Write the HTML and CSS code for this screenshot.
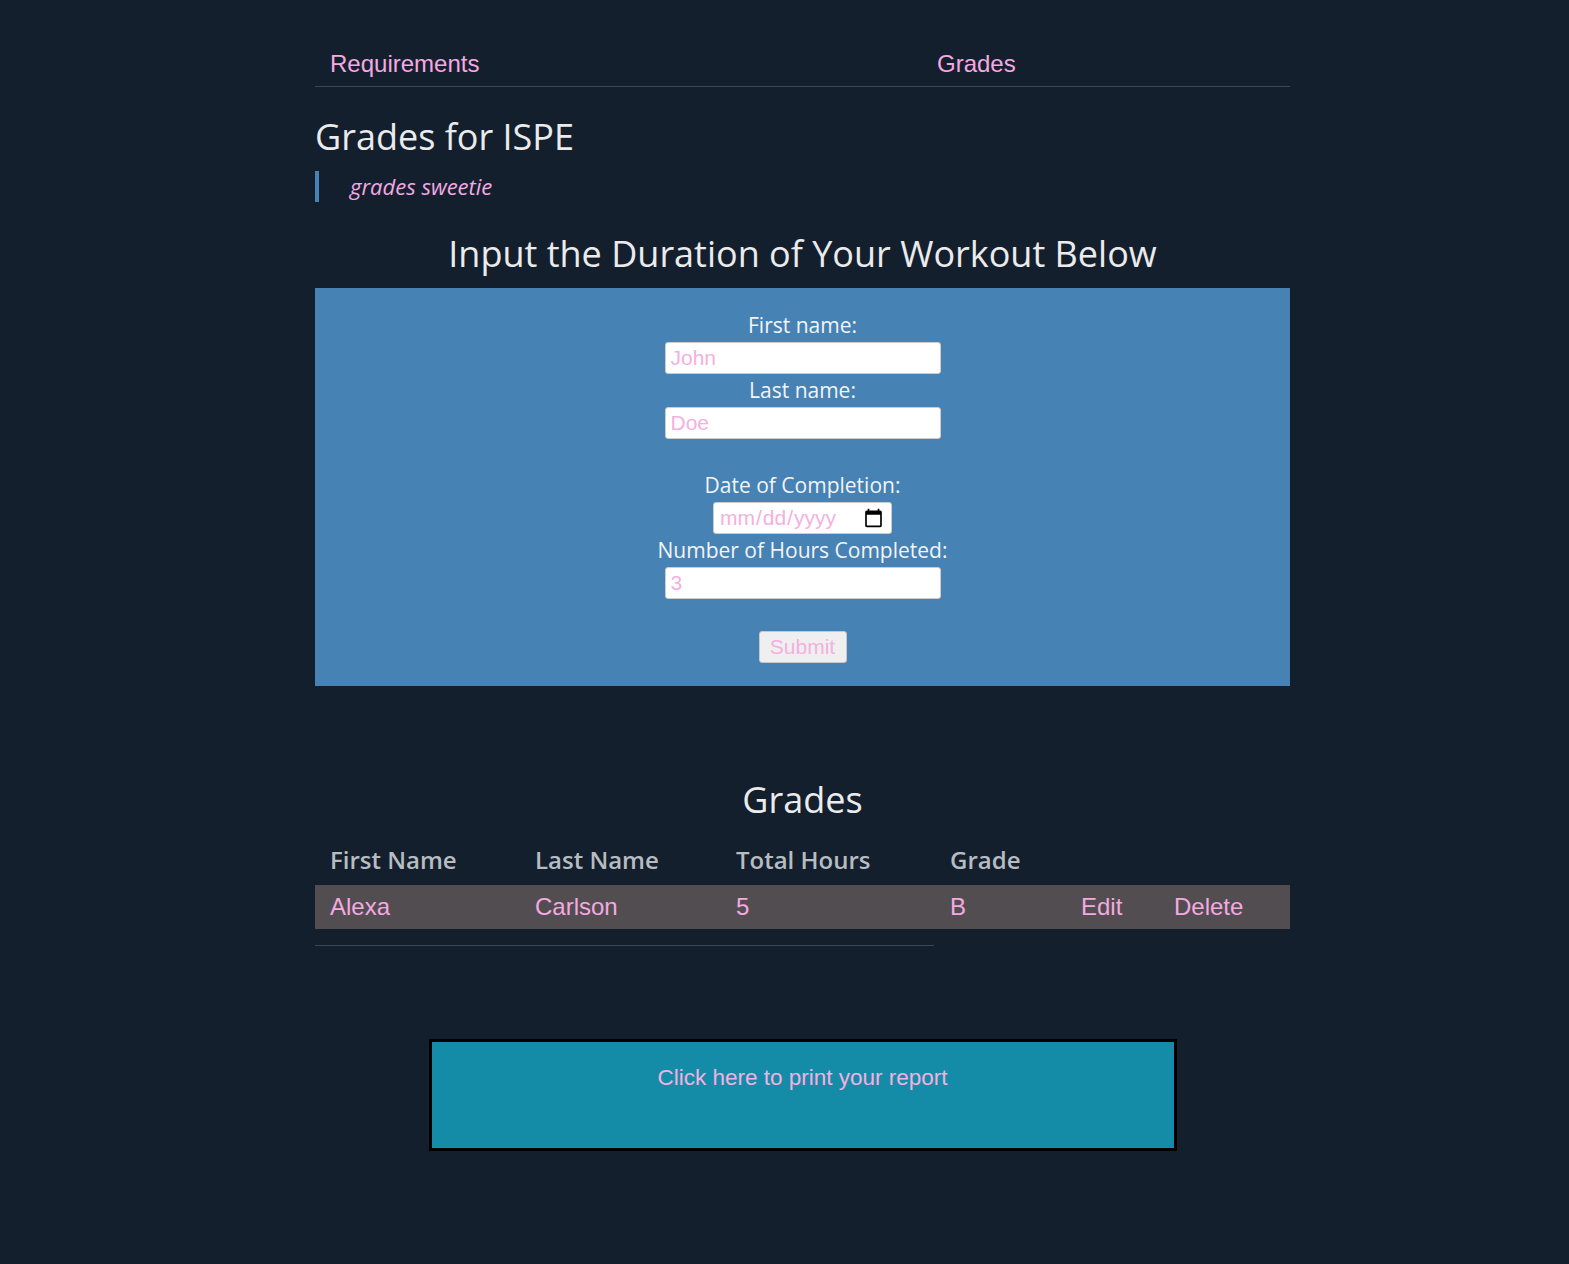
FILE: index.html
```html
<!DOCTYPE html>
<html>
<head>
<meta charset="utf-8">
<link rel="stylesheet" href="styles.css">
</head>
<body>
<div class="container">
  <nav class="nav">
    <a class="nav-link" href="#">Requirements</a>
    <a class="nav-link" href="#">Grades</a>
  </nav>
  <h1 class="page-title">Grades for ISPE</h1>
  <blockquote class="quote">grades sweetie</blockquote>
  <h2 class="section-title">Input the Duration of Your Workout Below</h2>
  <form class="form-box">
    <label class="lbl">First name:</label>
    <input class="field" type="text" placeholder="John">
    <label class="lbl">Last name:</label>
    <input class="field" type="text" placeholder="Doe">
    <div class="spacer"></div>
    <label class="lbl">Date of Completion:</label>
    <input class="field date" type="date">
    <label class="lbl">Number of Hours Completed:</label>
    <input class="field" type="text" placeholder="3">
    <button class="submit" type="button">Submit</button>
  </form>
  <h2 class="section-title grades-title">Grades</h2>
  <table class="grades">
    <colgroup>
      <col class="c1"><col class="c2"><col class="c3"><col class="c4"><col class="c5"><col>
    </colgroup>
    <thead>
      <tr><th>First Name</th><th>Last Name</th><th>Total Hours</th><th>Grade</th><th></th><th></th></tr>
    </thead>
    <tbody>
      <tr><td>Alexa</td><td>Carlson</td><td>5</td><td>B</td><td>Edit</td><td>Delete</td></tr>
    </tbody>
  </table>
  <hr class="rule">
  <div class="print-wrap">
    <div class="print-box">Click here to print your report</div>
  </div>
</div>
</body>
</html>
```

FILE: styles.css
```css
html, body {
  margin: 0;
  padding: 0;
  background: #141f2e;
}
body {
  font-family: "Open Sans", sans-serif;
  color: #ebebeb;
  min-height: 1264px;
}
.container {
  width: 975px;
  margin-left: 315px;
  padding-top: 47px;
}
.nav {
  display: grid;
  grid-template-columns: 607px 1fr;
  padding-left: 15px;
  border-bottom: 1px solid #3c4654;
  padding-bottom: 5px;
}
.nav-link {
  font-family: "Liberation Sans", Arial, sans-serif;
  font-size: 24px;
  color: #f5a9e1;
  text-decoration: none;
  line-height: 34px;
}
.page-title {
  font-size: 36px;
  font-weight: 400;
  margin: 22px 0 0;
  line-height: 56px;
  color: #ebebeb;
}
.quote {
  margin: 6px 0 0;
  border-left: 4px solid #4682b4;
  padding-left: 31px;
  font-style: italic;
  font-size: 22px;
  color: #f5a9e1;
  line-height: 31px;
}
.section-title {
  font-size: 36px;
  font-weight: 400;
  text-align: center;
  margin: 25px 0 0;
  line-height: 54px;
  color: #ebebeb;
}
.form-box {
  background: #4682b4;
  margin-top: 7px;
  height: 398px;
  box-sizing: border-box;
  padding-top: 21px;
  display: flex;
  flex-direction: column;
  align-items: center;
}
.lbl {
  font-size: 21px;
  color: #f2f4f7;
  line-height: 33px;
}
.field {
  width: 276px;
  height: 32px;
  box-sizing: border-box;
  border: 1px solid #ccc;
  border-radius: 3px;
  background: #fff;
  font-family: "Liberation Sans", Arial, sans-serif;
  font-size: 21px;
  color: #f5a9e1;
  padding: 0 5px;
  margin: 0;
}
.field::placeholder {
  color: #f5b0e0;
}
.date {
  width: 179px;
  color: #f5b0e0;
}
.spacer {
  height: 30px;
}
.submit {
  margin-top: 32px;
  width: 88px;
  height: 32px;
  background: #efefef;
  border: 1px solid #c8c8c8;
  border-radius: 3px;
  font-family: "Liberation Sans", Arial, sans-serif;
  font-size: 21px;
  color: #f5b0e0;
  padding: 0;
}
.grades-title {
  margin-top: 87px;
}
.grades {
  width: 100%;
  table-layout: fixed;
  border-collapse: collapse;
  margin-top: 14px;
}
.c1 { width: 205px; }
.c2 { width: 201px; }
.c3 { width: 214px; }
.c4 { width: 131px; }
.c5 { width: 93px; }
.grades th {
  text-align: left;
  font-weight: 600;
  font-size: 24px;
  color: #b7bcc1;
  padding: 0 15px 7px;
  height: 44px;
  box-sizing: border-box;
}
.grades td {
  font-family: "Liberation Sans", Arial, sans-serif;
  font-size: 24px;
  color: #f5a9e1;
  background: #524d50;
  padding: 0 15px;
  height: 44px;
}
.rule {
  width: 619px;
  margin: 16px 0 0;
  border: 0;
  border-top: 1px solid #3c4654;
}
.print-wrap {
  display: flex;
  justify-content: center;
  padding-top: 93px;
}
.print-box {
  width: 748px;
  height: 112px;
  box-sizing: border-box;
  border: 3px solid #000;
  background: #148ca8;
  font-family: "Liberation Sans", Arial, sans-serif;
  font-size: 22.5px;
  color: #f5b0e0;
  text-align: center;
  padding-top: 23px;
}
```
